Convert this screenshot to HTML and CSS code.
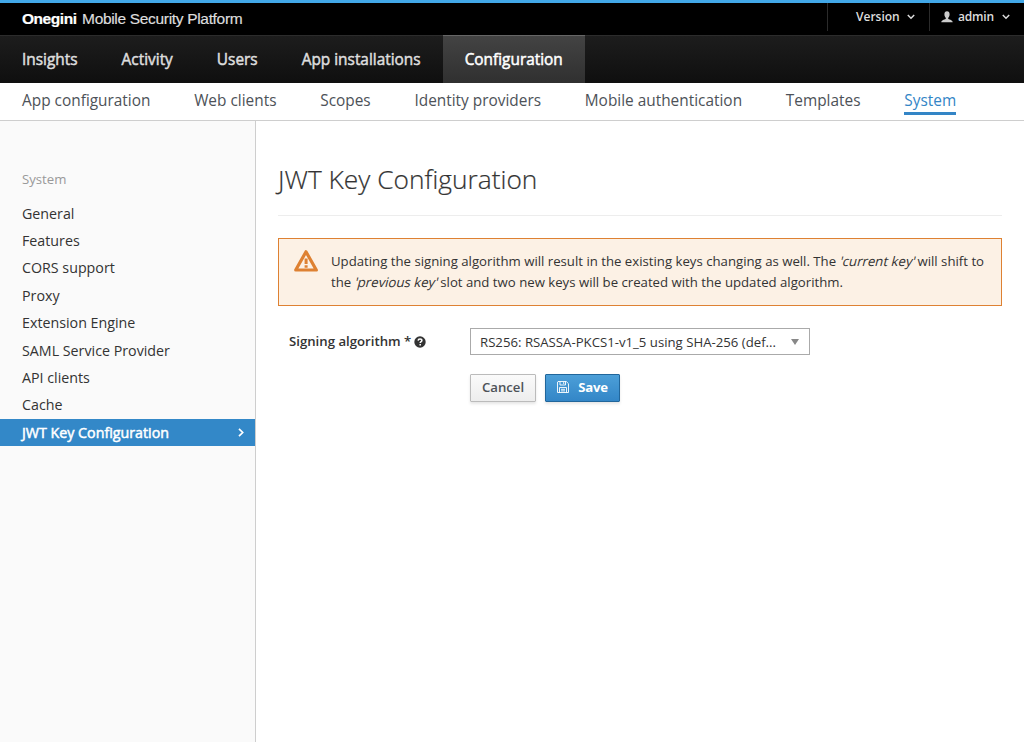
FILE: index.html
```
<!DOCTYPE html>
<html lang="en">
<head>
<meta charset="utf-8">
<title>Onegini Mobile Security Platform</title>
<link rel="stylesheet" href="styles.css">
</head>
<body>
<header class="topbar">
  <div class="brand"><b>Onegini</b> <span>Mobile Security Platform</span></div>
  <div class="utility">
    <a class="util version"><span>Version</span><svg class="caret" viewBox="0 0 8 6"><path d="M.8 1L4 4.200 7.200 1"/></svg></a>
    <a class="util user"><svg class="person" viewBox="0 0 12 12"><path d="M6 .3C4.300.3 3.400 1.500 3.400 3.200c0 1.600.6 2.900 1.400 3.500v1.100C4.600 8.700.5 8.600.3 11.300h11.400C11.500 8.600 7.400 8.700 7.200 7.800V6.700c.8-.6 1.400-1.900 1.400-3.500C8.600 1.500 7.700.3 6 .3z"/></svg><span>admin</span><svg class="caret" viewBox="0 0 8 6"><path d="M.8 1L4 4.200 7.200 1"/></svg></a>
  </div>
</header>
<nav class="primary">
  <a>Insights</a>
  <a>Activity</a>
  <a>Users</a>
  <a>App installations</a>
  <a class="active">Configuration</a>
</nav>
<nav class="secondary">
  <a>App configuration</a>
  <a>Web clients</a>
  <a>Scopes</a>
  <a>Identity providers</a>
  <a>Mobile authentication</a>
  <a>Templates</a>
  <a class="current">System</a>
</nav>
<div class="layout">
  <aside class="sidebar">
    <h2>System</h2>
    <ul>
      <li>General</li>
      <li>Features</li>
      <li>CORS support</li>
      <li>Proxy</li>
      <li>Extension Engine</li>
      <li>SAML Service Provider</li>
      <li>API clients</li>
      <li>Cache</li>
      <li class="selected"><span>JWT Key Configuration</span><svg class="chevron" viewBox="0 0 6 9"><path d="M1 .8l3.700 3.700L1 8.200"/></svg></li>
    </ul>
  </aside>
  <main class="content">
    <h1>JWT Key Configuration</h1>
    <div class="alert">
      <svg class="warning" viewBox="0 0 26 24"><path class="outline" d="M13 2.800L23.300 21H2.700z"/><path class="mark" d="M11.600 9.500h3v5.400h-3zM11.600 16.200h3v2.600h-3z"/></svg>
      <p>Updating the signing algorithm will result in the existing keys changing as well. The <em>'current key'</em> will shift to<br>the <em>'previous key'</em> slot and two new keys will be created with the updated algorithm.</p>
    </div>
    <form class="form">
      <div class="row">
        <label>Signing algorithm * <svg class="help" viewBox="0 0 12 12"><circle cx="6" cy="6" r="5.700"/><path d="M4.100 4.600C4.200 3.300 5 2.900 6 2.900c1.100 0 1.900.6 1.900 1.600C7.900 5.700 6.200 5.700 6.200 7.100"/><path d="M6.200 8.100v1.500"/></svg></label>
        <div class="select"><span>RS256: RSASSA-PKCS1-v1_5 using SHA-256 (def...</span><svg class="arrow" viewBox="0 0 8 6"><path d="M0 0h8L4 6z"/></svg></div>
      </div>
      <div class="actions">
        <button type="button" class="btn">Cancel</button>
        <button type="button" class="btn save"><svg class="floppy" viewBox="0 0 12 12"><path d="M1 .5h8.300l2.200 2.200v8.800H.5V1zM3 .5v3.500h5.500V.5M6.700 1v2M2.500 11.500v-5h7v5M4 8.300h4M4 9.900h4"/></svg><span>Save</span></button>
      </div>
    </form>
  </main>
</div>
</body>
</html>
```
FILE: styles.css
```
* { box-sizing: border-box; }
body {
  margin: 0;
  height: 742px;
  display: flex;
  flex-direction: column;
  overflow: hidden;
  background: #fff;
  color: #333;
  font: 14.250px/20px "Open Sans", sans-serif;
}
a, li, label, h1, h2, span { white-space: nowrap; }
svg { flex: none; fill: none; }
.topbar {
  height: 35px;
  flex: none;
  display: flex;
  justify-content: space-between;
  background: #000;
  border-top: 3px solid #42a8e8;
}
.brand {
  padding: 6px 0 0 22px;
  color: #ddd;
  font: 15.500px/20px "Liberation Sans", sans-serif;
  letter-spacing: -0.320px;
  -webkit-text-stroke: 0.200px currentColor;
}
.brand b { color: #fff; letter-spacing: -0.450px; margin-right: 1.500px; }
.utility { display: flex; height: 28px; }
.util {
  display: flex;
  align-items: center;
  border-left: 1px solid #2b2b2b;
  color: #ddd;
  font-size: 12px;
  font-weight: 600;
}
.version { width: 102px; padding-left: 28px; gap: 7px; }
.user { width: 95px; padding-left: 11px; }
.user span { letter-spacing: -0.200px; }
.person { width: 12px; height: 12px; fill: #ccc; margin-right: 5px; }
.user .caret { margin-left: 8px; }
.caret { width: 8px; height: 6px; stroke: #ddd; stroke-width: 1.5; }
.primary {
  height: 48px;
  flex: none;
  display: flex;
  background: linear-gradient(#1d1d1d, #0f0f0f);
  border-top: 1px solid #2c2c2c;
}
.primary a {
  height: 48px;
  margin-top: -1px;
  padding: 14px 22px 0;
  border-top: 1px solid transparent;
  color: #ddd;
  font-size: 15.400px;
  -webkit-text-stroke: 0.500px currentColor;
}
.primary .active {
  color: #fff;
  border-top-color: #666;
  background: linear-gradient(#434343, #303030);
}
.secondary {
  height: 38px;
  flex: none;
  display: flex;
  gap: 43.750px;
  padding: 8px 22px 0;
  border-bottom: 1px solid #cecece;
  color: #4d5258;
  font-size: 15.400px;
}
.secondary .current { height: 24px; color: #3385c6; border-bottom: 3px solid #3385c6; }
.layout { flex: 1; display: flex; }
.sidebar { width: 256px; flex: none; background: #fafafa; border-right: 1px solid #cecece; }
.sidebar h2 { margin: 48px 0 10.700px 22px; color: #999; font-size: 13.200px; font-weight: 400; line-height: 20px; }
.sidebar ul { margin: 0; padding: 0; list-style: none; }
.sidebar li { height: 27.400px; line-height: 27.400px; padding: 0 11px 0 22px; }
.sidebar .selected {
  display: flex;
  align-items: center;
  justify-content: space-between;
  background: #3388c8;
  color: #fff;
  -webkit-text-stroke: 0.500px currentColor;
}
.chevron { width: 6px; height: 9px; stroke: #fff; stroke-width: 1.7; }
.content { flex: 1; padding: 0 22px; }
.content h1 {
  margin: 0 0 22px;
  padding: 40px 0 17px;
  border-bottom: 1px solid #ededed;
  font-size: 26.300px;
  font-weight: 300;
  line-height: 37px;
  -webkit-text-stroke: 0.200px currentColor;
}
.alert {
  height: 68px;
  display: flex;
  padding: 10px 14px;
  border: 1px solid #de8132;
  background: #fcf1e5;
}
.warning { width: 26px; height: 24px; margin-right: 12px; }
.warning .outline { stroke: #de8132; stroke-width: 3.2; stroke-linejoin: round; }
.warning .mark { fill: #de8132; }
.alert p { margin: 2px 0 0; font-size: 13.200px; line-height: 21px; white-space: nowrap; }
.alert em { display: inline-block; margin-right: -1px; font-style: normal; transform: skewX(-14deg); }
.form { padding: 22px 0 0 11px; }
.row { display: flex; }
.row label { width: 181px; padding-top: 3px; font-size: 13.200px; font-weight: 600; }
.help { width: 12px; height: 12px; margin-left: -1px; vertical-align: -1.500px; }
.help circle { fill: #333; }
.help path { stroke: #fff; stroke-width: 1.5; }
.select {
  width: 340px;
  height: 27px;
  display: flex;
  align-items: center;
  justify-content: space-between;
  padding: 0 10px 0 9px;
  border: 1px solid #aaa;
  font-size: 13.200px;
}
.arrow { width: 8px; height: 6px; fill: #888; }
.actions { display: flex; gap: 9px; padding: 19px 0 0 181px; }
.btn {
  width: 66px;
  height: 28px;
  display: flex;
  align-items: center;
  justify-content: center;
  padding: 0 0 2px;
  border: 1px solid #bbb;
  border-radius: 1px;
  background: linear-gradient(#fafafa, #ededed);
  box-shadow: 0 2px 3px rgba(0, 0, 0, .1);
  color: #4d5258;
  font: 600 13.200px/20px "Open Sans", sans-serif;
}
.save {
  width: 75px;
  gap: 9px;
  border-color: #21669b;
  background: linear-gradient(#4c9fd8, #3386c7);
  color: #fff;
}
.save span { font-weight: 700; letter-spacing: -0.300px; }
.floppy { width: 12px; height: 12px; stroke: #fff; stroke-width: .9; }
```
